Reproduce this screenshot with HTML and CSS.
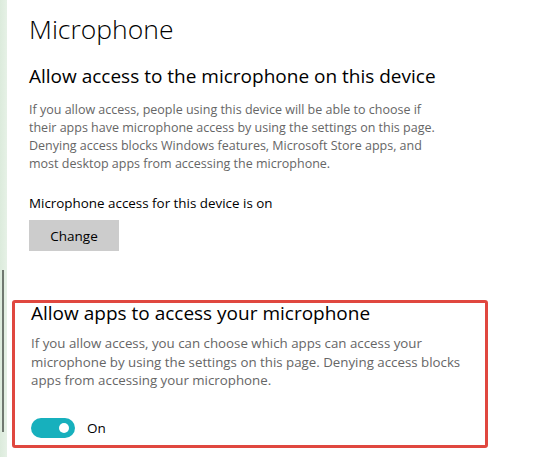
FILE: index.html
```html
<!DOCTYPE html>
<html>
<head>
<meta charset="utf-8">
<link rel="stylesheet" href="styles.css">
</head>
<body>
<div class="page">
  <aside class="rail"><div class="scroll"></div></aside>
  <main class="content">
    <h1 class="title">Microphone</h1>
    <section class="group">
      <h2 class="heading">Allow access to the microphone on this device</h2>
      <p class="desc">If you allow access, people using this device will be able to choose if their apps have microphone access by using the settings on this page. Denying access blocks Windows features, Microsoft Store apps, and most desktop apps from accessing the microphone.</p>
      <p class="status">Microphone access for this device is on</p>
      <button class="btn">Change</button>
    </section>
    <section class="group highlight">
      <h2 class="heading">Allow apps to access your microphone</h2>
      <p class="desc">If you allow access, you can choose which apps can access your microphone by using the settings on this page. Denying access blocks apps from accessing your microphone.</p>
      <div class="toggle-row">
        <span class="toggle"><span class="knob"></span></span>
        <span class="toggle-label">On</span>
      </div>
    </section>
  </main>
</div>
</body>
</html>
```
FILE: styles.css
```css
* { box-sizing: border-box; }
html, body { margin: 0; padding: 0; background: #fff; }
body { font-family: "Open Sans", "Noto Sans", sans-serif; color: #000; }
.page { display: flex; width: 560px; height: 457px; overflow: hidden; }
.rail { width: 7px; flex: none; background: linear-gradient(90deg, #dcebdc, #e6f1e6); padding: 270px 0 0 2px; }
.scroll { width: 2px; height: 162px; background: #6f786f; }
.content { flex: 1; padding-left: 22px; }
.title { font-size: 26.5px; font-weight: 300; margin: 10px 0 0; line-height: 38px; }
.heading { font-size: 19px; font-weight: 400; margin: 0; line-height: 26px; }
.group { margin-top: 15px; }
.desc { font-size: 12.5px; color: #666; line-height: 18px; margin: 12px 0 0; width: 408px; }
.status { font-size: 13.4px; margin: 20px 0 0; line-height: 20px; }
.btn { display: block; margin-top: 7px; width: 90px; height: 31px; border: none; background: #ccc; font: inherit; font-size: 13.5px; color: #000; padding: 0; }
.highlight { margin: 49px 0 0 -17px; width: 476px; border: 3px solid #e0473f; border-radius: 3px; padding: 0 0 7px 16px; }
.highlight .heading { margin-top: -1px; line-height: 22px; }
.highlight .desc { font-size: 13.3px; line-height: 18.5px; margin-top: 10px; width: 440px; }
.toggle-row { display: flex; align-items: center; gap: 12px; margin-top: 28px; }
.toggle { width: 44px; height: 20px; border-radius: 10px; background: #17b0bd; display: flex; justify-content: flex-end; align-items: center; padding-right: 6px; }
.knob { width: 10px; height: 10px; border-radius: 50%; background: #fff; }
.toggle-label { font-size: 13.5px; line-height: 20px; }
```
